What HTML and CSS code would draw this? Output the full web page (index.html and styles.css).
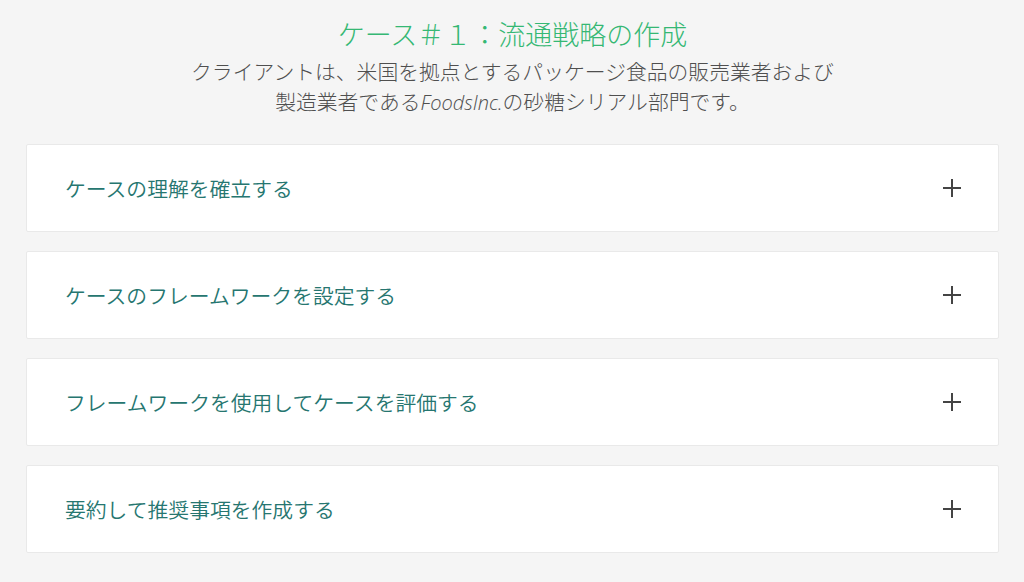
FILE: index.html
```html
<!DOCTYPE html>
<html lang="ja">
<head>
<meta charset="utf-8">
<link rel="stylesheet" href="styles.css">
</head>
<body>
<main class="page">
  <header class="intro">
    <h1 class="title">ケース＃１：流通戦略の作成</h1>
    <p class="lead">クライアントは、米国を拠点とするパッケージ食品の販売業者および<br>製造業者である<em class="brand">FoodsInc.</em>の砂糖シリアル部門です。</p>
  </header>
  <section class="accordion">
    <div class="item"><span class="label">ケースの理解を確立する</span><svg class="plus" viewBox="0 0 18 18" width="18" height="18"><path d="M9 0V18M0 9H18"/></svg></div>
    <div class="item"><span class="label">ケースのフレームワークを設定する</span><svg class="plus" viewBox="0 0 18 18" width="18" height="18"><path d="M9 0V18M0 9H18"/></svg></div>
    <div class="item"><span class="label">フレームワークを使用してケースを評価する</span><svg class="plus" viewBox="0 0 18 18" width="18" height="18"><path d="M9 0V18M0 9H18"/></svg></div>
    <div class="item"><span class="label">要約して推奨事項を作成する</span><svg class="plus" viewBox="0 0 18 18" width="18" height="18"><path d="M9 0V18M0 9H18"/></svg></div>
  </section>
</main>
</body>
</html>
```
FILE: styles.css
```css
html, body {
  margin: 0;
  padding: 0;
  background: #f5f5f5;
}
body {
  font-family: "Noto Sans CJK JP", "Noto Sans", sans-serif;
}
.page {
  padding: 15px 25px 0 26px;
}
.intro {
  text-align: center;
}
.title {
  margin: 0;
  font-size: 27px;
  line-height: 38px;
  font-weight: 300;
  color: #35b874;
}
.lead {
  margin: 3px 0 0;
  font-size: 20.8px;
  line-height: 30px;
  font-weight: 300;
  color: #4f4f4f;
}
.brand {
  font-family: "Open Sans", "Noto Sans", sans-serif;
  font-style: italic;
  font-weight: 300;
  font-size: 20px;
}
.accordion {
  margin-top: 26px;
  display: flex;
  flex-direction: column;
  gap: 19px;
}
.item {
  height: 88px;
  box-sizing: border-box;
  background: #ffffff;
  border: 1px solid #e9e9e9;
  border-radius: 2px;
  display: flex;
  align-items: center;
  justify-content: space-between;
  padding: 0 37px 0 38px;
}
.label {
  font-size: 20.8px;
  font-weight: 350;
  color: #267670;
}
.plus {
  stroke: #444444;
  stroke-width: 2;
  fill: none;
}
```
